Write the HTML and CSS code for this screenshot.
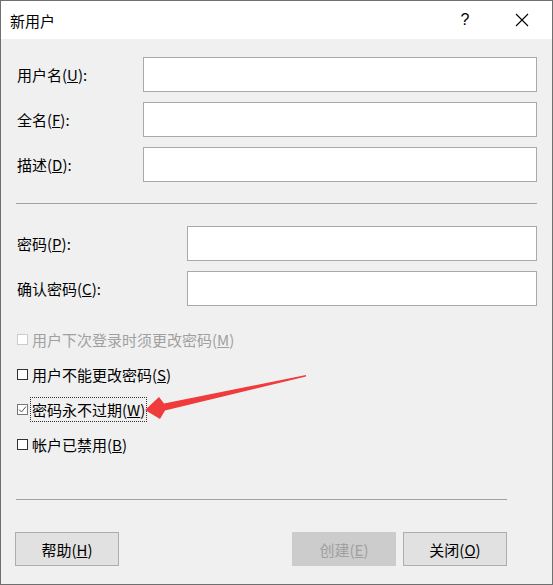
FILE: index.html
```html
<!DOCTYPE html>
<html lang="zh-CN">
<head>
<meta charset="utf-8">
<title>新用户</title>
<link rel="stylesheet" href="styles.css">
</head>
<body>
<div class="window">
  <div class="titlebar">
    <span class="title">新用户</span>
    <span class="help">?</span>
    <span class="close"><svg width="14" height="14" viewBox="0 0 14 14"><path d="M1 1 L13 13 M13 1 L1 13" stroke="#000" stroke-width="1.1" fill="none"/></svg></span>
  </div>
  <div class="content">
    <div class="rows">
      <div class="row"><span class="label">用户名(<u>U</u>):</span><span class="input wide"></span></div>
      <div class="row"><span class="label">全名(<u>F</u>):</span><span class="input wide"></span></div>
      <div class="row"><span class="label">描述(<u>D</u>):</span><span class="input wide"></span></div>
    </div>
    <div class="sep"></div>
    <div class="rows pwd">
      <div class="row"><span class="label">密码(<u>P</u>):</span><span class="input narrow"></span></div>
      <div class="row"><span class="label">确认密码(<u>C</u>):</span><span class="input narrow"></span></div>
    </div>
    <div class="checks">
      <div class="check disabled"><span class="box"></span><span class="ctext">用户下次登录时须更改密码(<u>M</u>)</span></div>
      <div class="check"><span class="box"></span><span class="ctext">用户不能更改密码(<u>S</u>)</span></div>
      <div class="check"><span class="box checked"><svg width="9" height="9" viewBox="0 0 9 9"><path d="M1 4.5 L3.5 7 L8 1.5" stroke="#555" stroke-width="1" fill="none"/></svg></span><span class="ctext focus">密码永不过期(<u>W</u>)</span></div>
      <div class="check"><span class="box"></span><span class="ctext">帐户已禁用(<u>B</u>)</span></div>
    </div>
    <div class="footer">
      <div class="sep2"></div>
      <div class="buttons">
        <span class="btn">帮助(<u>H</u>)</span>
        <span class="spacer"></span>
        <span class="btn dis">创建(<u>E</u>)</span>
        <span class="btn">关闭(<u>O</u>)</span>
      </div>
    </div>
  </div>
  <svg class="arrow" width="553" height="585" viewBox="0 0 553 585">
    <polygon points="306,375 164,403.5 159,397 145,410 160,419 165,410.5 306,376.5" fill="#ef3b3b"/>
  </svg>
</div>
</body>
</html>
```
FILE: styles.css
```css
html, body {
  margin: 0;
  padding: 0;
}
body {
  font-family: "Noto Sans CJK SC", "Noto Sans", sans-serif;
  font-size: 15px;
  color: #000;
}
.window {
  position: relative;
  width: 553px;
  height: 585px;
  box-sizing: border-box;
  border: 1px solid #6f6f6f;
  background: #f0f0f0;
  display: flex;
  flex-direction: column;
}
.titlebar {
  height: 38px;
  background: #fff;
  display: flex;
  align-items: center;
  padding-left: 9px;
}
.title {
  font-size: 15px;
  flex: 1;
}
.help {
  font-family: "Liberation Sans", sans-serif;
  font-size: 16px;
  width: 14px;
  text-align: center;
  margin-right: 43px;
}
.close {
  display: flex;
  margin-right: 23px;
}
.content {
  padding: 18px 15px 0 14px;
  display: flex;
  flex-direction: column;
  flex: 1;
}
.rows {
  display: flex;
  flex-direction: column;
  gap: 10px;
}
.row {
  display: flex;
  align-items: center;
  justify-content: space-between;
  height: 35px;
  padding-left: 2px;
}
.label {
  line-height: 20px;
}
.input {
  box-sizing: border-box;
  height: 35px;
  background: #fff;
  border: 1px solid #a9a9a9;
}
.wide { width: 394px; }
.narrow { width: 350px; }
.sep {
  height: 1px;
  background: #a0a0a0;
  margin: 21px 0 0 1px;
}
.pwd { margin-top: 22px; }
.checks {
  margin-top: 21px;
  display: flex;
  flex-direction: column;
  gap: 10px;
  padding-left: 2px;
}
.check {
  height: 25px;
  display: flex;
  align-items: center;
}
.box {
  box-sizing: border-box;
  width: 11px;
  height: 11px;
  border: 1px solid #333;
  background: #fff;
  display: flex;
  align-items: center;
  justify-content: center;
  margin-right: 2px;
}
.box.checked {
  border-color: #777;
}
.disabled .box {
  border-color: #ccc;
}
.disabled .ctext {
  color: #a0a0a0;
}
.ctext {
  line-height: 23px;
  padding: 0 1px;
  border: 1px solid transparent;
}
.ctext.focus {
  border: 1px dotted #333;
}
.footer {
  padding-right: 30px;
  display: flex;
  flex-direction: column;
}
.sep2 {
  height: 1px;
  background: #a0a0a0;
  margin: 42px 0 0 1px;
}
.buttons {
  margin-top: 32px;
  display: flex;
  gap: 7px;
}
.spacer { flex: 1; }
.btn {
  box-sizing: border-box;
  width: 104px;
  height: 34px;
  background: #e1e1e1;
  border: 1px solid #adadad;
  display: flex;
  align-items: center;
  justify-content: center;
}
.btn.dis {
  background: #cccccc;
  border-color: #cccccc;
  color: #a0a0a0;
}
.arrow {
  position: absolute;
  left: -1px;
  top: -1px;
  pointer-events: none;
}
```
